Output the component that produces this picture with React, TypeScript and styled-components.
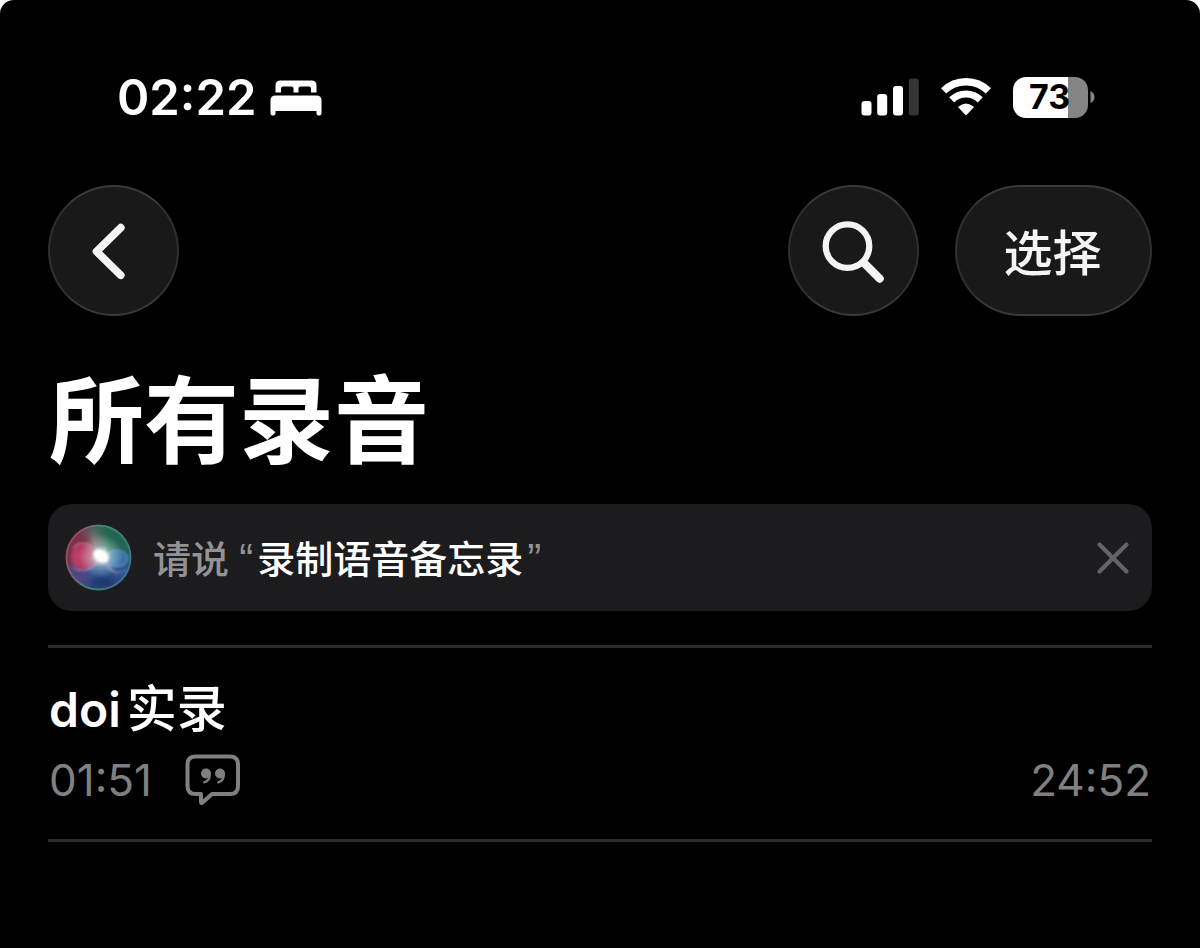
import React from 'react';
import styled, { createGlobalStyle } from 'styled-components';

const GlobalStyle = createGlobalStyle`
  * { box-sizing: border-box; }
  html { background: #fff; }
  body {
    margin: 0;
    font-family: Inter, "Noto Sans CJK SC", sans-serif;
    color: #fff;
  }
  button { font-family: inherit; color: inherit; }
`;

const Screen = styled.div`
  min-height: 100vh;
  padding: 59px 48px 48px;
  background: #000;
  border-radius: 14px 14px 0 0;
`;

const StatusBar = styled.header`
  display: flex;
  align-items: center;
  justify-content: space-between;
  height: 76px;
  padding: 0 57px 0 69px;
`;

const StatusGroup = styled.div<{ $gap: number; $drop?: number }>`
  display: flex;
  align-items: center;
  gap: ${({ $gap }) => $gap}px;
  padding-top: ${({ $drop = 0 }) => $drop}px;
`;

const Clock = styled.time`
  font-size: 49px;
  line-height: 60px;
  font-weight: 600;
`;

const Battery = styled.div`
  display: flex;
  align-items: center;
  gap: 2px;
`;

const BatteryBody = styled.div`
  display: flex;
  align-items: center;
  justify-content: center;
  width: 75px;
  height: 41px;
  padding-right: 2px;
  border-radius: 13px;
  background: linear-gradient(to right, #fff 73%, #848484 73%);
  color: #000;
  font-size: 34px;
  line-height: 40px;
  font-weight: 700;
`;

const Toolbar = styled.nav`
  display: flex;
  align-items: center;
  gap: 36px;
  margin-top: 50px;
`;

const Spacer = styled.div`
  flex: 1;
`;

const GlassButton = styled.button<{ $wide?: boolean }>`
  display: flex;
  align-items: center;
  justify-content: center;
  flex: none;
  width: ${({ $wide }) => ($wide ? 197 : 131)}px;
  height: 131px;
  padding: ${({ $wide }) => ($wide ? '6px 2px 0 0' : '0')};
  border: 2px solid #343434;
  border-color: #3a3a3a #303030 #3a3a3a #303030;
  border-radius: 66px;
  background: #191919;
  color: #f4f4f4;
  font-size: 49px;
  line-height: 64px;
  font-weight: 500;
`;

const Title = styled.h1`
  margin: 42px 0 0;
  padding-left: 1px;
  font-size: 95px;
  line-height: 128px;
  font-weight: 700;
`;

const Banner = styled.section`
  display: flex;
  align-items: center;
  height: 107px;
  margin-top: 18px;
  padding: 0 20px 0 17px;
  border-radius: 24px;
  background: #1c1c1e;
`;

const BannerText = styled.p`
  flex: 1;
  margin: 0 0 0 21px;
  padding-top: 3px;
  color: #929297;
  font-size: 38px;
  line-height: 56px;
  font-weight: 500;
`;

const Quote = styled.span`
  font-family: "Liberation Sans", sans-serif;
  font-size: 42px;
  line-height: 42px;
`;

const Phrase = styled.strong`
  margin: 0 4px;
  color: #fff;
  font-weight: 500;
`;

const CloseButton = styled.button`
  display: flex;
  padding: 0;
  border: 0;
  background: none;
  color: #636368;
`;

const Recordings = styled.ul`
  margin: 34px 0 0;
  padding: 0;
  list-style: none;
  border-top: 3px solid #2b2b2d;
`;

const Recording = styled.li`
  padding: 29px 1px 25px;
  border-bottom: 3px solid #2b2b2d;
`;

const RecordingName = styled.h2`
  margin: 0;
  font-size: 48px;
  line-height: 64px;
  font-weight: 600;
`;

const CjkName = styled.span`
  margin-left: 6px;
  font-size: 50px;
  font-weight: 500;
`;

const RecordingMeta = styled.div`
  display: flex;
  align-items: center;
  height: 68px;
  margin-top: 4px;
  gap: 33px;
  color: #808080;
  font-size: 44px;
  line-height: 56px;
`;

const BedIcon = () => (
  <svg width="52" height="36" viewBox="0 0 52 36" fill="#fff" aria-hidden="true">
    <path d="M5.500 12.500V5.500Q5.500 0.500 10.500 0.500H41.500Q46.500 0.500 46.500 5.500V12.500H41V8.500Q41 6.500 39 6.500H30.500Q28.500 6.500 28.500 8.500V12.500H23.500V8.500Q23.500 6.500 21.500 6.500H13Q11 6.500 11 8.500V12.500Z" />
    <path d="M0.500 20.500Q0.500 15.500 5.500 15.500H46.500Q51.500 15.500 51.500 20.500V33.500Q51.500 35.500 49.500 35.500H48.500Q46.500 35.500 46.500 33.500V31H5.500V33.500Q5.500 35.500 3.500 35.500H2.500Q0.500 35.500 0.500 33.500Z" />
  </svg>
);

const SignalIcon = () => (
  <svg width="58" height="38" viewBox="0 0 58 38" fill="#fff" role="img" aria-label="信号">
    <rect x="0.500" y="23" width="10" height="14.500" rx="3" />
    <rect x="16.200" y="16" width="10" height="21.500" rx="3" />
    <rect x="32" y="8" width="10" height="29.500" rx="3" />
    <rect x="47.800" y="0.500" width="10" height="37" rx="3" fill="#353535" />
  </svg>
);

const WifiIcon = () => (
  <svg width="50" height="38" viewBox="0 0 50 38" role="img" aria-label="无线局域网">
    <path d="M2.600 12.900A32 32 0 0 1 47.400 12.900" fill="none" stroke="#fff" strokeWidth="7.400" />
    <path d="M10.700 21.800A20.500 20.500 0 0 1 39.300 21.800" fill="none" stroke="#fff" strokeWidth="7.200" />
    <path d="M16.900 29.100Q25 22 33.100 29.100L26 36.500Q25 37.500 24 36.500Z" fill="#fff" />
  </svg>
);

const BatteryTip = () => (
  <svg width="5" height="14" viewBox="0 0 5 14" fill="#848484" aria-hidden="true">
    <path d="M0.500 1Q4.500 3 4.500 7T0.500 13Z" />
  </svg>
);

const BackIcon = () => (
  <svg width="131" height="131" viewBox="0 0 131 131" fill="none" stroke="currentColor" strokeWidth="8" strokeLinecap="round" strokeLinejoin="round" aria-hidden="true">
    <path d="M73 42L48 66.500L73 91" />
  </svg>
);

const SearchIcon = () => (
  <svg width="131" height="131" viewBox="0 0 131 131" fill="none" stroke="currentColor" strokeLinecap="round" aria-hidden="true">
    <circle cx="59.300" cy="61" r="22.500" strokeWidth="6.400" />
    <path d="M76 78L92.500 94.500" strokeWidth="8.500" />
  </svg>
);

const SiriOrb = () => (
  <svg width="67" height="67" viewBox="0 0 67 67" aria-hidden="true">
    <defs>
      <clipPath id="orb"><circle cx="33.500" cy="33.500" r="33" /></clipPath>
      <filter id="soft" x="-50%" y="-50%" width="200%" height="200%"><feGaussianBlur stdDeviation="4" /></filter>
      <filter id="slight" x="-50%" y="-50%" width="200%" height="200%"><feGaussianBlur stdDeviation="0.8" /></filter>
      <radialGradient id="glow">
        <stop offset="0" stopColor="#fff" />
        <stop offset=".2" stopColor="#fff" stopOpacity=".85" />
        <stop offset=".5" stopColor="#d5eeee" stopOpacity=".4" />
        <stop offset="1" stopColor="#b7e5e4" stopOpacity="0" />
      </radialGradient>
      <linearGradient id="rim" x1="0" y1=".3" x2="1" y2=".6">
        <stop offset="0" stopColor="#c83f62" />
        <stop offset=".45" stopColor="#4e9179" />
        <stop offset="1" stopColor="#3f7f98" />
      </linearGradient>
      <radialGradient id="pink" cx=".4" cy=".5" r=".6">
        <stop offset="0" stopColor="#c93f6d" />
        <stop offset="1" stopColor="#b93a60" stopOpacity=".7" />
      </radialGradient>
    </defs>
    <g clipPath="url(#orb)">
      <rect width="67" height="67" fill="#35545f" />
      <g filter="url(#soft)">
        <path d="M28 0H67V32L36 33Z" fill="#226651" />
        <path d="M0 5L20 0L34 32L0 46Z" fill="#7a3046" />
        <path d="M20 8L34 6L36 30Z" fill="#73736f" />
        <path d="M0 46L33 35L67 38V67H0Z" fill="#2d5290" />
        <path d="M2 42L12 40L26 58L16 62Z" fill="#5a3f78" />
        <path d="M22 58Q37 50 54 56L48 64H24Z" fill="#152f63" />
      </g>
      <g filter="url(#slight)">
        <path d="M36 33C28 15 8 15 6 32C6 51 29 52 36 33Z" fill="url(#pink)" />
        <path d="M8 24C16 14 29 20 35 31" fill="none" stroke="#dd7d94" strokeOpacity=".7" strokeWidth="1.200" />
        <path d="M37 34C44 23 62 23 63 34C62 46 46 45 37 34Z" fill="#3f77b0" fillOpacity=".85" />
        <path d="M43 29C51 23 62 26 63 34C61 45 50 44 42 38" fill="none" stroke="#65a4d9" strokeOpacity=".8" strokeWidth="1" />
        <path d="M7 44Q24 53 35 34Q46 54 61 46" fill="none" stroke="#78aed7" strokeOpacity=".55" strokeWidth="1.300" />
        <path d="M13 17L35 33L25 7L37 32L44 9L38 33Z" fill="#d8ddd0" fillOpacity=".22" />
        <path d="M37 36L54 54L41 36Z" fill="#b98bb6" fillOpacity=".6" />
      </g>
      <circle cx="36" cy="32" r="22" fill="url(#glow)" />
      <ellipse cx="36" cy="32" rx="8" ry="5.500" fill="#fff" filter="url(#slight)" transform="rotate(32 36 32)" />
      <circle cx="33.500" cy="33.500" r="32" fill="none" stroke="url(#rim)" strokeWidth="1.800" strokeOpacity=".75" />
    </g>
  </svg>
);

const CloseIcon = () => (
  <svg width="37" height="37" viewBox="0 0 37 37" fill="none" stroke="currentColor" strokeWidth="4.200" strokeLinecap="round" aria-hidden="true">
    <path d="M4.500 5.500L31.500 32.500M31.500 5.500L4.500 32.500" />
  </svg>
);

const TranscriptIcon = () => (
  <svg width="56" height="52" viewBox="0 0 56 52" fill="none" stroke="currentColor" role="img" aria-label="转写文本">
    <path d="M10.500 2.500H45Q53 2.500 53 10.500V32Q53 40 45 40H27L17.500 48.500Q16 49.800 16 47.800V40H10.500Q2.500 40 2.500 32V10.500Q2.500 2.500 10.500 2.500Z" strokeWidth="4" strokeLinejoin="round" />
    <circle cx="21" cy="19.500" r="5" fill="currentColor" stroke="none" />
    <circle cx="35" cy="19.500" r="5" fill="currentColor" stroke="none" />
    <path d="M24.800 20Q24.800 27 19.300 28.300M38.800 20Q38.800 27 33.300 28.300" strokeWidth="2.400" strokeLinecap="round" />
  </svg>
);

export default function App() {
  return (
    <>
      <GlobalStyle />
      <Screen>
        <StatusBar>
          <StatusGroup $gap={13} $drop={2}>
            <Clock>02:22</Clock>
            <BedIcon />
          </StatusGroup>
          <StatusGroup $gap={22}>
            <SignalIcon />
            <WifiIcon />
            <Battery>
              <BatteryBody>73</BatteryBody>
              <BatteryTip />
            </Battery>
          </StatusGroup>
        </StatusBar>

        <Toolbar>
          <GlassButton type="button" aria-label="返回"><BackIcon /></GlassButton>
          <Spacer />
          <GlassButton type="button" aria-label="搜索"><SearchIcon /></GlassButton>
          <GlassButton type="button" $wide>选择</GlassButton>
        </Toolbar>

        <main>
          <Title>所有录音</Title>
          <Banner>
            <SiriOrb />
            <BannerText>请说 <Quote>“</Quote><Phrase>录制语音备忘录</Phrase><Quote>”</Quote></BannerText>
            <CloseButton type="button" aria-label="关闭"><CloseIcon /></CloseButton>
          </Banner>

          <Recordings>
            <Recording>
              <RecordingName>doi<CjkName>实录</CjkName></RecordingName>
              <RecordingMeta>
                <time>01:51</time>
                <TranscriptIcon />
                <Spacer />
                <time>24:52</time>
              </RecordingMeta>
            </Recording>
          </Recordings>
        </main>
      </Screen>
    </>
  );
}
